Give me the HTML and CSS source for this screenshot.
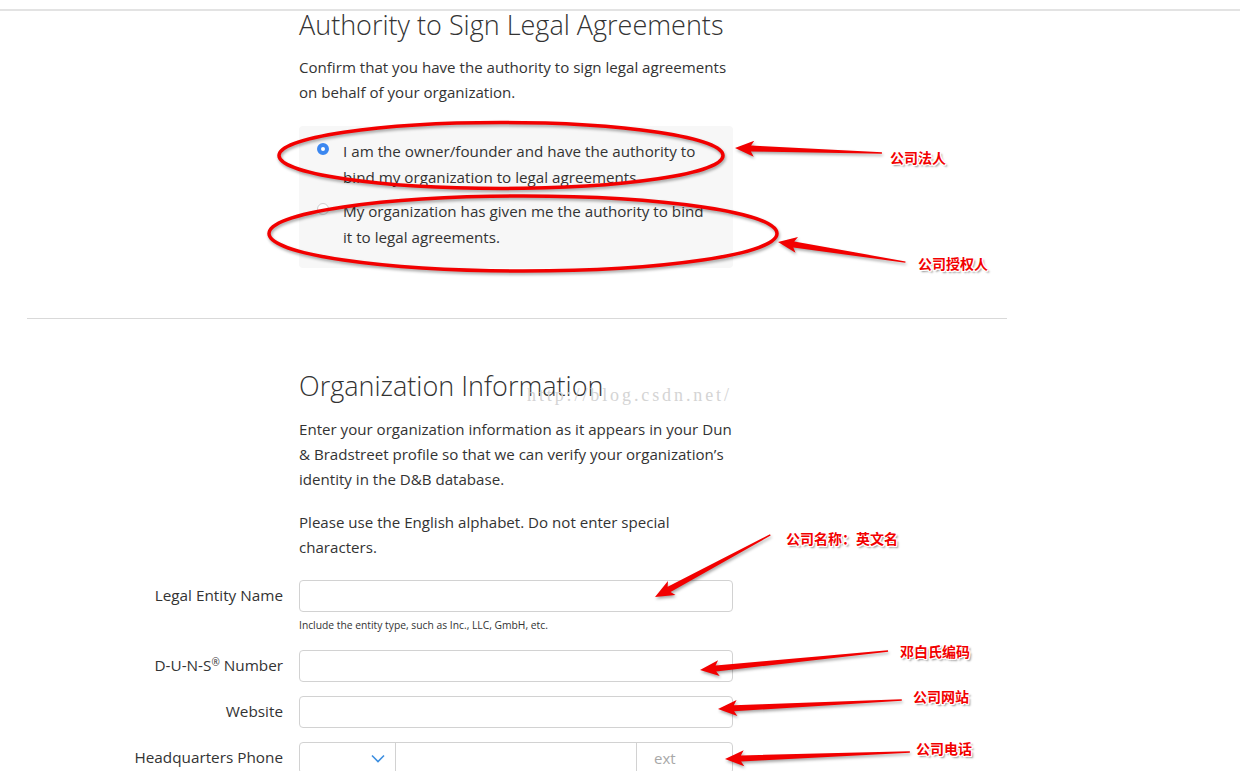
FILE: index.html
```html
<!DOCTYPE html>
<html lang="en">
<head>
<meta charset="utf-8">
<title>Organization enrollment</title>
<link rel="stylesheet" href="styles.css">
</head>
<body>
<div class="topline"></div>
<div class="page">
  <section class="section authority">
    <div class="col">
      <h1 class="title">Authority to Sign Legal Agreements</h1>
      <p class="lead">Confirm that you have the authority to sign legal agreements on behalf of your organization.</p>
      <div class="radio-box">
        <div class="radio-item">
          <span class="radio checked"></span>
          <span class="radio-text">I am the owner/founder and have the authority to bind my organization to legal agreements.</span>
        </div>
        <div class="radio-item">
          <span class="radio"></span>
          <span class="radio-text">My organization has given me the authority to bind it to legal agreements.</span>
        </div>
      </div>
    </div>
  </section>
  <hr class="divider">
  <section class="section org">
    <div class="col">
      <h1 class="title">Organization Information</h1>
      <p class="lead">Enter your organization information as it appears in your Dun &amp; Bradstreet profile so that we can verify your organization’s identity in the D&amp;B database.</p>
      <p class="lead second">Please use the English alphabet. Do not enter special characters.</p>
    </div>
  </section>
  <div class="form">
    <div class="field">
      <label class="label">Legal Entity Name</label>
      <div class="input"></div>
      <div class="helper">Include the entity type, such as Inc., LLC, GmbH, etc.</div>
    </div>
    <div class="field">
      <label class="label">D-U-N-S<sup class="reg">®</sup> Number</label>
      <div class="input"></div>
    </div>
    <div class="field">
      <label class="label">Website</label>
      <div class="input"></div>
    </div>
    <div class="field">
      <label class="label">Headquarters Phone</label>
      <div class="input phone">
        <div class="ph-code">
          <svg class="chev" width="14" height="9" viewBox="0 0 14 9"><path d="M1 1.5 L7 7.5 L13 1.5" fill="none" stroke="#3d8fe0" stroke-width="1.6"/></svg>
        </div>
        <div class="ph-num"></div>
        <div class="ph-ext">ext</div>
      </div>
    </div>
  </div>
</div>

<div class="watermark">http://blog.csdn.net/</div>

<svg class="annot" width="1240" height="771" viewBox="0 0 1240 771">
  <ellipse cx="501" cy="155.5" rx="222" ry="33" fill="none" stroke="#f20000" stroke-width="3.5"/>
  <ellipse cx="523" cy="233.5" rx="254" ry="37.5" fill="none" stroke="#f20000" stroke-width="3.5"/>
  <g fill="#f20000">
    <polygon transform="translate(735 148) rotate(1.95)" points="0,0 19,-8 16,-3 147,-0.7 147,0.7 16,3 19,8"/>
    <polygon transform="translate(778 242) rotate(8.95)" points="0,0 19,-8 16,-3 129,-0.7 129,0.7 16,3 19,8"/>
    <polygon transform="translate(655 597) rotate(-28.3)" points="0,0 19,-8 16,-3 131,-0.7 131,0.7 16,3 19,8"/>
    <polygon transform="translate(700 670) rotate(-5.77)" points="0,0 19,-8 16,-3 189,-0.7 189,0.7 16,3 19,8"/>
    <polygon transform="translate(718 709) rotate(-2.8)" points="0,0 19,-8 16,-3 184,-0.7 184,0.7 16,3 19,8"/>
    <polygon transform="translate(725 759) rotate(-2.17)" points="0,0 19,-8 16,-3 185,-0.7 185,0.7 16,3 19,8"/>
  </g>
</svg>

<span class="note n1">公司法人</span>
<span class="note n2">公司授权人</span>
<span class="note n3">公司名称：英文名</span>
<span class="note n4">邓白氏编码</span>
<span class="note n5">公司网站</span>
<span class="note n6">公司电话</span>
</body>
</html>
```

FILE: styles.css
```css
html {
  overflow: hidden;
}

body {
  margin: 0;
  position: relative;
  height: 771px;
  background: #ffffff;
  color: #333333;
  font-family: "Open Sans", "Liberation Sans", sans-serif;
}

.topline {
  margin-top: 9px;
  border-top: 2px solid #e3e3e3;
}

.page {
  width: 980px;
  margin-left: 27px;
}

.section {
  padding-left: 272px;
}

.col {
  width: 434px;
}

.title {
  margin: 0 0 16px;
  font-size: 27px;
  line-height: 30px;
  font-weight: 300;
  color: #333333;
  white-space: nowrap;
}

.authority .title {
  margin-top: -1px;
  margin-bottom: 15px;
}

.lead {
  margin: 0;
  font-size: 15.1px;
  line-height: 25px;
}

.lead.second {
  margin-top: 18px;
}

.radio-box {
  margin-top: 21px;
  background: #f7f7f7;
  border-radius: 4px;
  padding: 12px 18px 18px 18px;
  display: flex;
  flex-direction: column;
  gap: 8px;
}

.radio-item {
  display: flex;
  align-items: flex-start;
  gap: 14px;
  font-size: 15.2px;
  line-height: 26px;
}

.radio {
  flex: none;
  width: 12px;
  height: 12px;
  margin-top: 5px;
  border-radius: 50%;
  box-sizing: border-box;
  border: 1px solid #cfcfcf;
  background: #ffffff;
}

.radio.checked {
  border: 4px solid #3b87f0;
  background: #ffffff;
}

.divider {
  margin: 50px 0 0;
  border: 0;
  border-top: 1px solid #d9d9d9;
  height: 0;
}

.org {
  padding-top: 52px;
}

.form {
  margin-top: 20px;
  display: flex;
  flex-direction: column;
  gap: 14px;
}

.field {
  display: grid;
  grid-template-columns: 256px 434px;
  column-gap: 16px;
  align-items: center;
}

.label {
  text-align: right;
  font-size: 15.3px;
  line-height: 20px;
  color: #333333;
  white-space: nowrap;
  margin-top: -2px;
}

.reg {
  font-size: 10px;
  line-height: 0;
  vertical-align: 5px;
}

.input {
  height: 32px;
  box-sizing: border-box;
  border: 1px solid #d2d2d2;
  border-radius: 4px;
  background: #ffffff;
}

.helper {
  grid-column: 2;
  margin: 6px 0 3px;
  font-size: 10.3px;
  line-height: 15px;
  color: #333333;
}

.phone {
  display: flex;
  overflow: hidden;
}

.ph-code {
  width: 95px;
  flex: none;
  display: flex;
  align-items: center;
  justify-content: flex-end;
  padding-right: 10px;
  box-sizing: border-box;
}

.chev {
  display: block;
}

.ph-num {
  flex: 1;
  border-left: 1px solid #d2d2d2;
}

.ph-ext {
  width: 96px;
  flex: none;
  box-sizing: border-box;
  border-left: 1px solid #d2d2d2;
  padding-left: 17px;
  font-size: 15px;
  line-height: 30px;
  color: #a8a8a8;
}

.watermark {
  position: absolute;
  left: 527px;
  top: 384px;
  font-family: "Liberation Serif", serif;
  font-size: 18px;
  line-height: 22px;
  letter-spacing: 2.9px;
  color: #d4d4d4;
  white-space: nowrap;
}

.annot {
  position: absolute;
  left: 0;
  top: 0;
  filter: drop-shadow(1px 2px 1.5px rgba(0, 0, 0, 0.35));
}

.note {
  position: absolute;
  font-family: "Noto Sans CJK SC", "Noto Sans", sans-serif;
  font-size: 14px;
  line-height: 16px;
  font-weight: 700;
  color: #f20000;
  white-space: nowrap;
  text-shadow:
    -1px -1px 0 #fff, 1px -1px 0 #fff, -1px 1px 0 #fff, 1px 1px 0 #fff,
    0 -1px 0 #fff, 0 1px 0 #fff, -1px 0 0 #fff, 1px 0 0 #fff,
    2px 2px 2px rgba(0, 0, 0, 0.45);
}

.n1 { left: 890px; top: 149px; }
.n2 { left: 918px; top: 255px; }
.n3 { left: 786px; top: 530px; }
.n4 { left: 900px; top: 643px; }
.n5 { left: 913px; top: 688px; }
.n6 { left: 916px; top: 740px; }
```
